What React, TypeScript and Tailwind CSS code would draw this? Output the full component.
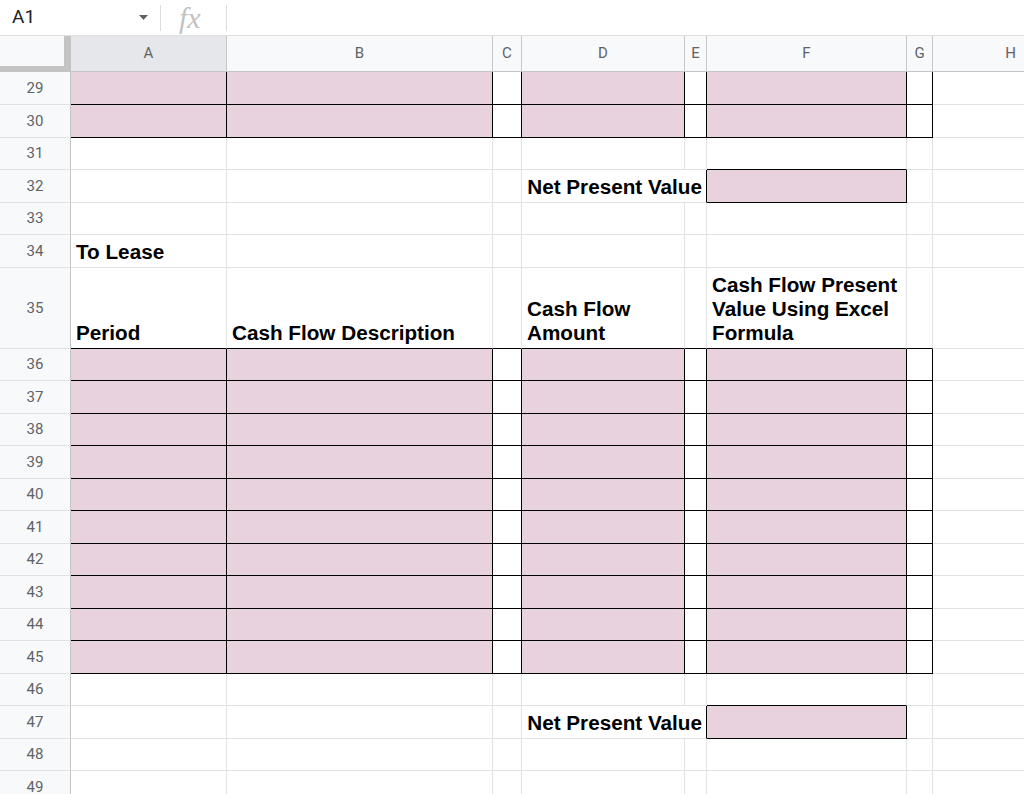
import React from 'react';
import clsx from 'clsx';

type Col = { k: string; w: string };
type Spec = { fill?: boolean; r?: boolean; b?: boolean; w?: string; content?: React.ReactNode; cls?: string };

const COLS: Col[] = [
  { k: 'A', w: 'w-[156px]' },
  { k: 'B', w: 'w-[266px]' },
  { k: 'C', w: 'w-[29px]' },
  { k: 'D', w: 'w-[163px]' },
  { k: 'E', w: 'w-[22px]' },
  { k: 'F', w: 'w-[200px]' },
  { k: 'G', w: 'w-[26px]' },
  { k: 'H', w: 'w-[156px]' },
];

const BOLD = "font-['Liberation_Sans',Arial,sans-serif] font-bold text-[20.7px] leading-[24px] text-black";
const UI = "font-['Roboto','Liberation_Sans',Arial,sans-serif]";

function Cell({ w, spec }: { w: string; spec: Spec }) {
  return (
    <div
      className={clsx(
        'shrink-0 h-full border-r border-b',
        spec.w ?? w,
        spec.fill ? 'bg-[#e8d2dd]' : 'bg-white',
        spec.r ? 'border-r-black' : 'border-r-[#e2e2e2]',
        spec.b ? 'border-b-black' : 'border-b-[#e2e2e2]',
        spec.cls
      )}
    >
      {spec.content}
    </div>
  );
}

const boxed = (fill: boolean): Spec => ({ fill, r: true, b: true });

function rowSpecs(type: string): Spec[] {
  const blank = (): Spec => ({});
  if (type === 'table') {
    return [boxed(true), boxed(true), boxed(false), boxed(true), boxed(false), boxed(true), boxed(false), blank()];
  }
  if (type === 'npvTop') {
    return [blank(), blank(), blank(), blank(), blank(), { b: true }, blank(), blank()];
  }
  if (type === 'npv') {
    return [
      blank(),
      blank(),
      blank(),
      {
        w: 'w-[185px]',
        r: true,
        cls: 'flex items-end justify-end pr-[4px] pb-[3px]',
        content: <span className={clsx(BOLD, 'whitespace-nowrap')}>Net Present Value</span>,
      },
      boxed(true),
      blank(),
      blank(),
    ];
  }
  if (type === 'lease') {
    return [
      { cls: 'flex items-end pl-[5px] pb-[3px]', content: <span className={clsx(BOLD, 'whitespace-nowrap')}>To Lease</span> },
      blank(), blank(), blank(), blank(), blank(), blank(), blank(),
    ];
  }
  if (type === 'head') {
    const h = (lines: string[]): Spec => ({
      b: true,
      cls: 'flex flex-col justify-end pl-[5px] pb-[3px]',
      content: lines.map((l) => (
        <div key={l} className={clsx(BOLD, 'whitespace-nowrap')}>{l}</div>
      )),
    });
    return [
      h(['Period']),
      h(['Cash Flow Description']),
      { b: true },
      h(['Cash Flow', 'Amount']),
      { b: true },
      h(['Cash Flow Present', 'Value Using Excel', 'Formula']),
      { b: true },
      blank(),
    ];
  }
  return COLS.map(() => blank());
}

const ROWS: { n: number; h: string; type: string }[] = [
  { n: 29, h: 'h-[33px]', type: 'table' },
  { n: 30, h: 'h-[33px]', type: 'table' },
  { n: 31, h: 'h-[32px]', type: 'npvTop' },
  { n: 32, h: 'h-[33px]', type: 'npv' },
  { n: 33, h: 'h-[32px]', type: 'blank' },
  { n: 34, h: 'h-[33px]', type: 'lease' },
  { n: 35, h: 'h-[81px]', type: 'head' },
  { n: 36, h: 'h-[32px]', type: 'table' },
  { n: 37, h: 'h-[33px]', type: 'table' },
  { n: 38, h: 'h-[32px]', type: 'table' },
  { n: 39, h: 'h-[33px]', type: 'table' },
  { n: 40, h: 'h-[32px]', type: 'table' },
  { n: 41, h: 'h-[33px]', type: 'table' },
  { n: 42, h: 'h-[32px]', type: 'table' },
  { n: 43, h: 'h-[33px]', type: 'table' },
  { n: 44, h: 'h-[32px]', type: 'table' },
  { n: 45, h: 'h-[33px]', type: 'table' },
  { n: 46, h: 'h-[32px]', type: 'npvTop' },
  { n: 47, h: 'h-[33px]', type: 'npv' },
  { n: 48, h: 'h-[32px]', type: 'blank' },
  { n: 49, h: 'h-[33px]', type: 'blank' },
];

export default function App() {
  return (
    <div className="w-[1024px] h-[794px] overflow-hidden bg-white">
      {/* formula bar */}
      <div className="h-[36px] flex items-center border-b border-[#e0e0e0] bg-white">
        <div className={clsx(UI, 'w-[128px] pl-[12px] text-[19px] text-[#202124]')}>A1</div>
        <svg width="9" height="5" viewBox="0 0 9 5" className="ml-[11px]">
          <path d="M0 0 H9 L4.5 5 Z" fill="#5f6368" />
        </svg>
        <div className="ml-[12px] w-px h-[26px] bg-[#dadce0]" />
        <div className="ml-[18px] w-[40px] h-[35px] flex items-center font-['Liberation_Serif',serif] italic text-[30px] leading-[30px] text-[#c2c2c2]">fx</div>
        <div className="ml-[7px] w-px h-[26px] bg-[#dadce0]" />
      </div>

      {/* column headers */}
      <div className="h-[36px] flex">
        <div className="shrink-0 w-[71px] h-full bg-[#f8f9fa] border-r-[7px] border-b-[6px] border-[#c4c4c4]" />
        {COLS.map((c) => (
          <div
            key={c.k}
            className={clsx(
              UI,
              'shrink-0 h-full flex items-center justify-center border-r border-b border-r-[#c8c8c8] border-b-[#c4c4c4] text-[15px] text-[#5f6368]',
              c.w,
              c.k === 'A' ? 'bg-[#e6e7ea]' : 'bg-[#f8f9fa]'
            )}
          >
            {c.k}
          </div>
        ))}
      </div>

      {/* rows */}
      {ROWS.map((row) => {
        const specs = rowSpecs(row.type);
        let ci = 0;
        return (
          <div key={row.n} className={clsx('flex', row.h)}>
            <div
              className={clsx(
                UI,
                'shrink-0 w-[71px] h-full bg-[#f8f9fa] border-r border-b border-r-[#c4c4c4] border-b-[#e2e2e2] flex items-center justify-center text-[15px] text-[#5f6368]'
              )}
            >
              {row.n}
            </div>
            {specs.map((s, i) => {
              const col = COLS[ci] ?? COLS[COLS.length - 1];
              ci += s.w ? 2 : 1;
              return <Cell key={i} w={col.w} spec={s} />;
            })}
          </div>
        );
      })}
    </div>
  );
}
